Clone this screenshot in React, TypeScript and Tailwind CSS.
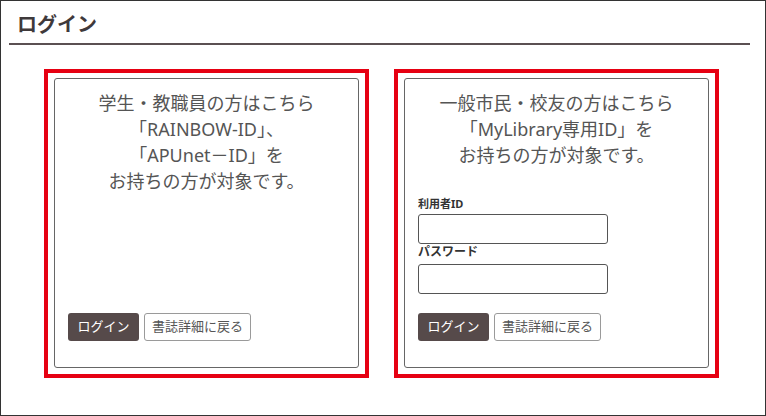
import React from "react";

const font = { fontFamily: '"Noto Sans", "Noto Sans CJK JP", sans-serif' };

const Buttons = () => (
  <div className="flex gap-[5px]">
    <button
      type="button"
      className="h-[28px] w-[71px] rounded-[3px] bg-[#564a4a] text-[13px] text-white"
    >
      ログイン
    </button>
    <button
      type="button"
      className="h-[28px] w-[107px] rounded-[3px] border border-[#9a9a9a] bg-white text-[13px] text-[#555]"
    >
      書誌詳細に戻る
    </button>
  </div>
);

const Card = ({ children }: { children: React.ReactNode }) => (
  <div className="h-[309px] w-[325px] border-[4px] border-[#e60012] px-[6px] pt-[5px] pb-[6px]">
    <div className="flex h-full flex-col rounded-[3px] border border-[#666] px-[13px] pt-[11px] pb-[26px]">
      {children}
    </div>
  </div>
);

const App = () => {
  return (
    <div
      className="h-[416px] w-[766px] border border-[#333] bg-white"
      style={font}
    >
      <div className="ml-[8px] mr-[15px] border-b-2 border-[#5b5052] pl-[8px] pt-[10px] pb-[4px]">
        <h1 className="text-[20px] font-bold leading-[28px] text-[#3f393b]">
          ログイン
        </h1>
      </div>

      <div className="ml-[43px] mt-[24px] flex gap-[25px]">
        <Card>
          <div className="text-center text-[18px] leading-[26px] text-[#555]">
            <p>学生・教職員の方はこちら</p>
            <p>「RAINBOW-ID」、</p>
            <p>「APUnet－ID」を</p>
            <p>お持ちの方が対象です。</p>
          </div>
          <div className="mt-auto">
            <Buttons />
          </div>
        </Card>

        <Card>
          <div className="text-center text-[18px] leading-[26px] text-[#555]">
            <p>一般市民・校友の方はこちら</p>
            <p>「MyLibrary専用ID」を</p>
            <p>お持ちの方が対象です。</p>
          </div>
          <form className="mt-[28px]">
            <label
              htmlFor="uid"
              className="block h-[16px] text-[11px] font-bold leading-[16px] text-[#333]"
            >
              利用者ID
            </label>
            <input
              id="uid"
              type="text"
              className="mt-[2px] block h-[30px] w-[190px] rounded-[3px] border border-[#555] bg-white"
            />
            <label
              htmlFor="pw"
              className="block h-[16px] text-[12px] font-bold leading-[16px] text-[#333]"
            >
              パスワード
            </label>
            <input
              id="pw"
              type="password"
              className="mt-[4px] block h-[30px] w-[190px] rounded-[3px] border border-[#555] bg-white"
            />
          </form>
          <div className="mt-auto">
            <Buttons />
          </div>
        </Card>
      </div>
    </div>
  );
};

export default App;
